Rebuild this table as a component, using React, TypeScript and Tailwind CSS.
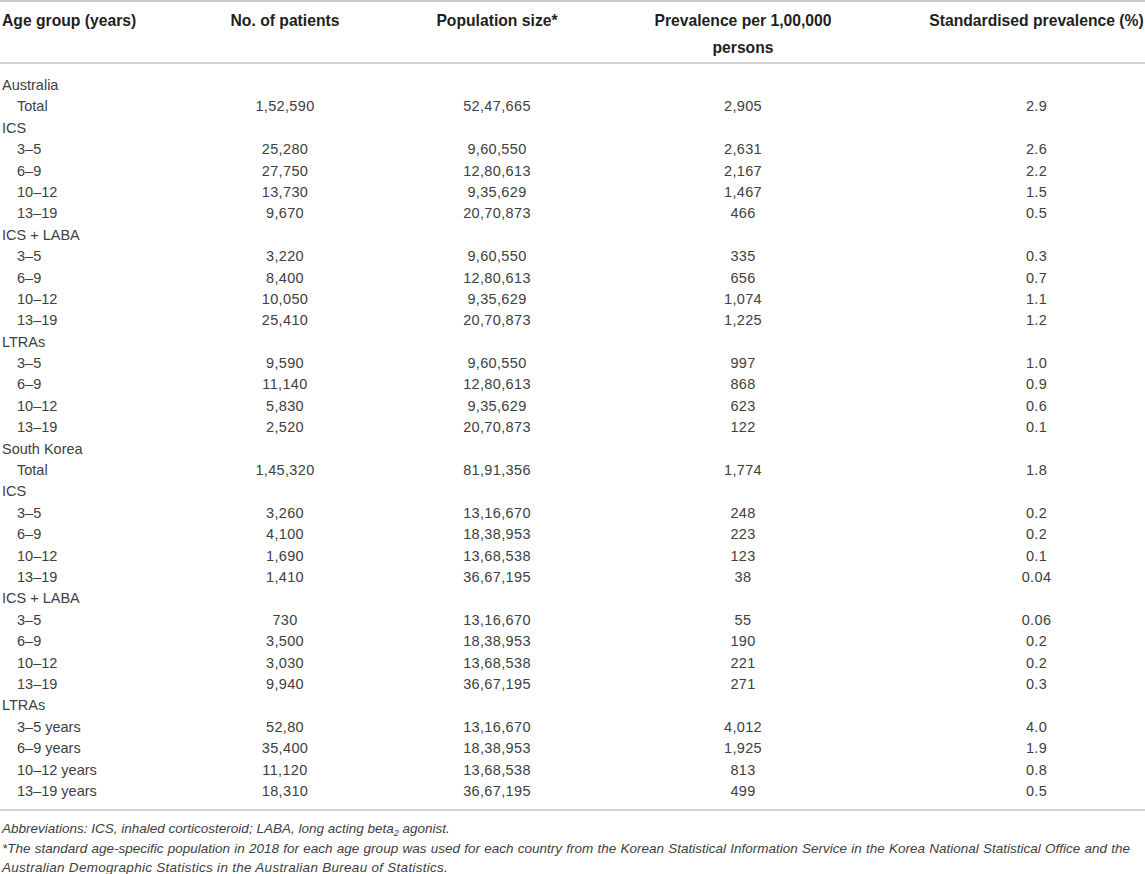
import React from 'react';

type Row = [string, string?, string?, string?, string?];

// indented rows start with two spaces in the label
const rows: Row[] = [
  ['Australia'],
  ['  Total', '1,52,590', '52,47,665', '2,905', '2.9'],
  ['ICS'],
  ['  3–5', '25,280', '9,60,550', '2,631', '2.6'],
  ['  6–9', '27,750', '12,80,613', '2,167', '2.2'],
  ['  10–12', '13,730', '9,35,629', '1,467', '1.5'],
  ['  13–19', '9,670', '20,70,873', '466', '0.5'],
  ['ICS + LABA'],
  ['  3–5', '3,220', '9,60,550', '335', '0.3'],
  ['  6–9', '8,400', '12,80,613', '656', '0.7'],
  ['  10–12', '10,050', '9,35,629', '1,074', '1.1'],
  ['  13–19', '25,410', '20,70,873', '1,225', '1.2'],
  ['LTRAs'],
  ['  3–5', '9,590', '9,60,550', '997', '1.0'],
  ['  6–9', '11,140', '12,80,613', '868', '0.9'],
  ['  10–12', '5,830', '9,35,629', '623', '0.6'],
  ['  13–19', '2,520', '20,70,873', '122', '0.1'],
  ['South Korea'],
  ['  Total', '1,45,320', '81,91,356', '1,774', '1.8'],
  ['ICS'],
  ['  3–5', '3,260', '13,16,670', '248', '0.2'],
  ['  6–9', '4,100', '18,38,953', '223', '0.2'],
  ['  10–12', '1,690', '13,68,538', '123', '0.1'],
  ['  13–19', '1,410', '36,67,195', '38', '0.04'],
  ['ICS + LABA'],
  ['  3–5', '730', '13,16,670', '55', '0.06'],
  ['  6–9', '3,500', '18,38,953', '190', '0.2'],
  ['  10–12', '3,030', '13,68,538', '221', '0.2'],
  ['  13–19', '9,940', '36,67,195', '271', '0.3'],
  ['LTRAs'],
  ['  3–5 years', '52,80', '13,16,670', '4,012', '4.0'],
  ['  6–9 years', '35,400', '18,38,953', '1,925', '1.9'],
  ['  10–12 years', '11,120', '13,68,538', '813', '0.8'],
  ['  13–19 years', '18,310', '36,67,195', '499', '0.5'],
];

const cols = 'grid grid-cols-[134px_302px_122px_370px_217px]';
const num = 'justify-self-center whitespace-nowrap tracking-[0.35px]';
const head = 'justify-self-center whitespace-nowrap text-center';

export default function App() {
  return (
    <div className="w-[1145px] overflow-hidden bg-white font-['Liberation_Sans',Arial,sans-serif] text-[#404040]">
      <div className="border-t-2 border-[#c9c9c9]">
        {/* Header */}
        <div className={`${cols} h-[60px] pt-[5px] text-[15.7px] font-bold leading-[27px] text-[#1f1f1f]`}>
          <div className="pl-[2px] whitespace-nowrap">Age group (years)</div>
          <div className={head}>No. of patients</div>
          <div className={head}>Population size*</div>
          <div className={head}>
            Prevalence per 1,00,000
            <br />
            persons
          </div>
          <div className={head}>Standardised prevalence (%)</div>
        </div>

        {/* Body */}
        <div className="border-t-2 border-[#d2d2d2] pt-[11px] pb-[7px] text-[14.5px] leading-[21.4px]">
          {rows.map((r, i) => {
            const indent = r[0].startsWith('  ');
            return (
              <div key={i} className={`${cols} h-[21.4px]`}>
                <div className={`whitespace-nowrap ${indent ? 'pl-[17px]' : 'pl-[2px]'}`}>{r[0].trim()}</div>
                <div className={num}>{r[1] ?? ''}</div>
                <div className={num}>{r[2] ?? ''}</div>
                <div className={num}>{r[3] ?? ''}</div>
                <div className={num}>{r[4] ?? ''}</div>
              </div>
            );
          })}
        </div>

        {/* Footnotes */}
        <div className="border-t-2 border-[#d2d2d2] pt-[8px] pl-[2px] text-[13.5px] italic leading-[19.5px] text-[#404040]">
          <p className="whitespace-nowrap">
            Abbreviations: ICS, inhaled corticosteroid; LABA, long acting beta<sub className="text-[9px]">2</sub> agonist.
          </p>
          <p className="w-[1128px] whitespace-nowrap text-justify [text-align-last:justify]">
            *The standard age-specific population in 2018 for each age group was used for each country from the Korean Statistical Information Service in the Korea National Statistical Office and the
          </p>
          <p className="whitespace-nowrap tracking-[0.28px]">Australian Demographic Statistics in the Australian Bureau of Statistics.</p>
        </div>
      </div>
    </div>
  );
}
